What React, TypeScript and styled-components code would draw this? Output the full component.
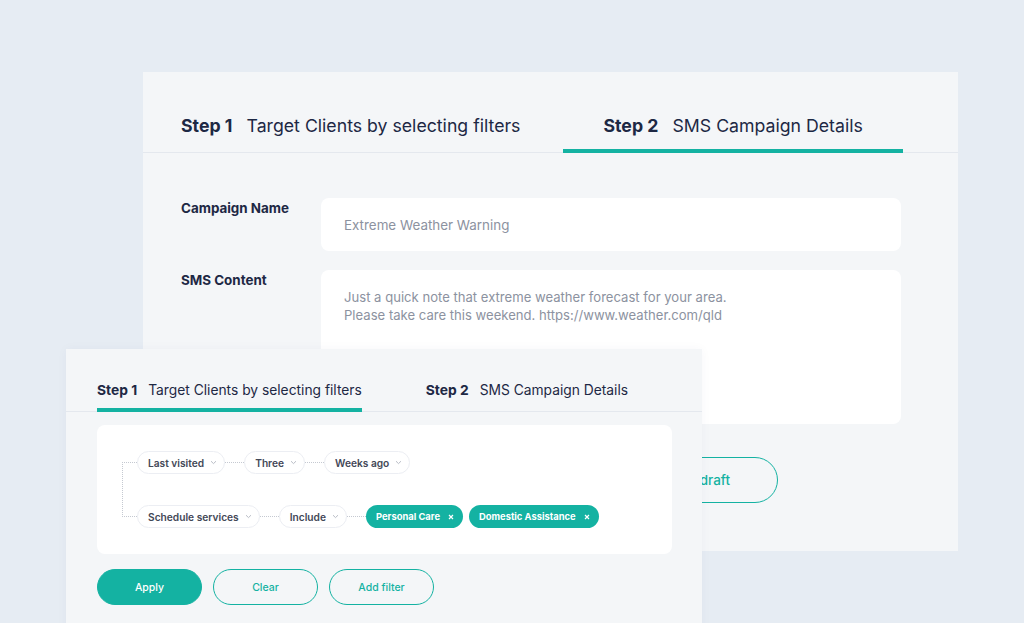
import styled, { createGlobalStyle } from "styled-components";

const teal = '#14b2a2'
const navy = '#1d2844'

const GlobalStyle = createGlobalStyle`
    html, body {
        margin: 0;
        padding: 0;
        background: #e6ecf3;
        font-family: Inter, "Noto Sans", sans-serif;
        color: ${navy};
    }
    #root {
        height: 623px;
        overflow: hidden;
    }
`

const Stage = styled.div`
    position: relative;
    width: 1024px;
    height: 623px;
    padding-top: 72px;
    box-sizing: border-box;
`

const BackCard = styled.section`
    margin-left: 143px;
    width: 815px;
    height: 479px;
    background: #f4f6f8;
    display: flex;
    flex-direction: column;
`

const FrontCard = styled.section`
    position: absolute;
    left: 66px;
    top: 349px;
    width: 636px;
    height: 290px;
    background: #f4f6f8;
    box-shadow: 0 0 10px rgba(40, 60, 90, 0.04);
    display: flex;
    flex-direction: column;
`

const TabRow = styled.div<{$height: number, $pad: number, $gap: number}>`
    display: flex;
    align-items: flex-end;
    height: ${p => p.$height}px;
    padding-left: ${p => p.$pad}px;
    gap: ${p => p.$gap}px;
    border-bottom: 1px solid #e4e8ee;
    box-sizing: border-box;
`

const Tab = styled.div<{$active: boolean, $size: number, $pad: number, $bottom: number}>`
    display: flex;
    align-items: baseline;
    gap: ${p => p.$size * 0.8}px;
    font-size: ${p => p.$size}px;
    padding: 0 ${p => p.$pad}px ${p => p.$bottom}px;
    margin-bottom: -1px;
    border-bottom: 4px solid ${p => p.$active ? teal : 'transparent'};
    white-space: nowrap;
    b { font-weight: 700; }
    span { font-weight: 400; }
`

const Form = styled.div`
    padding: 45px 57px 0 38px;
    display: flex;
    flex-direction: column;
    gap: 19px;
`

const FieldRow = styled.div`
    display: flex;
`

const Label = styled.div`
    width: 140px;
    flex-shrink: 0;
    font-size: 13.4px;
    font-weight: 700;
    padding-top: 2px;
    line-height: 16px;
`

const InputBox = styled.div<{$height: number, $size: number}>`
    flex: 1;
    height: ${p => p.$height}px;
    background: #fff;
    border-radius: 8px;
    box-sizing: border-box;
    padding: 18px 23px;
    font-size: ${p => p.$size}px;
    line-height: 18px;
    color: #8c92a0;
`

const BackButtons = styled.div`
    display: flex;
    gap: 97px;
    padding: 33px 0 0 178px;
`

const OutlineButton = styled.div<{$w: number, $h: number, $size: number, $filled?: boolean}>`
    width: ${p => p.$w}px;
    height: ${p => p.$h}px;
    border-radius: ${p => p.$h / 2}px;
    border: 1.5px solid ${teal};
    box-sizing: border-box;
    background: ${p => p.$filled ? teal : 'transparent'};
    color: ${p => p.$filled ? '#fff' : teal};
    font-size: ${p => p.$size}px;
    font-weight: 500;
    display: flex;
    align-items: center;
    justify-content: center;
`

const FilterBox = styled.div`
    margin: 13px 30px 0 31px;
    height: 129px;
    background: #fff;
    border-radius: 8px;
    padding: 26px 0 0 25px;
    box-sizing: border-box;
`

const Tree = styled.div`
    position: relative;
    display: flex;
    flex-direction: column;
    gap: 31px;
    padding-left: 15px;
    &::before {
        content: '';
        position: absolute;
        left: 0;
        top: 11px;
        bottom: 11px;
        border-left: 1px dotted #c5c9d1;
    }
`

const FilterRow = styled.div`
    position: relative;
    display: flex;
    align-items: center;
    height: 23px;
    &::before {
        content: '';
        position: absolute;
        left: -15px;
        width: 15px;
        top: 11px;
        border-top: 1px dotted #c5c9d1;
    }
`

const Connector = styled.div`
    width: 19px;
    border-top: 1px dotted #c5c9d1;
`

const Chip = styled.div`
    height: 23px;
    display: flex;
    align-items: center;
    gap: 6px;
    padding: 0 7px 0 10px;
    border: 1px solid #eceef3;
    border-radius: 12px;
    box-sizing: border-box;
    font-size: 10.2px;
    font-weight: 600;
    color: #434857;
    white-space: nowrap;
`

const Tag = styled.div`
    height: 23px;
    display: flex;
    align-items: center;
    gap: 8px;
    padding: 0 9px 0 10px;
    border-radius: 12px;
    background: ${teal};
    color: #fff;
    font-size: 9.4px;
    font-weight: 700;
    white-space: nowrap;
`

const TagGap = styled.div`
    width: 6px;
`

const FrontButtons = styled.div`
    display: flex;
    gap: 11px;
    padding: 15px 0 0 31px;
`

const Chevron = () => (
    <svg width="7" height="5" viewBox="0 0 7 5">
        <path d="M1 1.2 L3.5 3.6 L6 1.2" fill="none" stroke="#b9bdc6" strokeWidth="1" />
    </svg>
)

const Cross = () => (
    <svg width="6" height="6" viewBox="0 0 6 6">
        <path d="M1 1 L5 5 M5 1 L1 5" stroke="#fff" strokeWidth="1.2" />
    </svg>
)

export default function App() {
    return (
        <Stage>
            <GlobalStyle />
            <BackCard>
                <TabRow $height={81} $pad={0} $gap={5}>
                    <Tab $active={false} $size={17.7} $pad={38} $bottom={13}>
                        <b>Step 1</b><span>Target Clients by selecting filters</span>
                    </Tab>
                    <Tab $active={true} $size={17.7} $pad={40} $bottom={13}>
                        <b>Step 2</b><span>SMS Campaign Details</span>
                    </Tab>
                </TabRow>
                <Form>
                    <FieldRow>
                        <Label>Campaign Name</Label>
                        <InputBox $height={53} $size={13.4}>Extreme Weather Warning</InputBox>
                    </FieldRow>
                    <FieldRow>
                        <Label>SMS Content</Label>
                        <InputBox $height={154} $size={13.1}>
                            Just a quick note that extreme weather forecast for your area.<br />
                            Please take care this weekend. https://www.weather.com/qld
                        </InputBox>
                    </FieldRow>
                </Form>
                <BackButtons>
                    <OutlineButton $w={180} $h={46} $size={13.5} $filled>Send now</OutlineButton>
                    <OutlineButton $w={180} $h={46} $size={13.5}>Save as draft</OutlineButton>
                </BackButtons>
            </BackCard>

            <FrontCard>
                <TabRow $height={63} $pad={31} $gap={64}>
                    <Tab $active={true} $size={13.8} $pad={0} $bottom={10}>
                        <b>Step 1</b><span>Target Clients by selecting filters</span>
                    </Tab>
                    <Tab $active={false} $size={13.8} $pad={0} $bottom={10}>
                        <b>Step 2</b><span>SMS Campaign Details</span>
                    </Tab>
                </TabRow>
                <FilterBox>
                    <Tree>
                        <FilterRow>
                            <Chip>Last visited <Chevron /></Chip>
                            <Connector />
                            <Chip>Three <Chevron /></Chip>
                            <Connector />
                            <Chip>Weeks ago <Chevron /></Chip>
                        </FilterRow>
                        <FilterRow>
                            <Chip>Schedule services <Chevron /></Chip>
                            <Connector />
                            <Chip>Include <Chevron /></Chip>
                            <Connector />
                            <Tag>Personal Care <Cross /></Tag>
                            <TagGap />
                            <Tag>Domestic Assistance <Cross /></Tag>
                        </FilterRow>
                    </Tree>
                </FilterBox>
                <FrontButtons>
                    <OutlineButton $w={105} $h={36} $size={10.5} $filled>Apply</OutlineButton>
                    <OutlineButton $w={105} $h={36} $size={10.5}>Clear</OutlineButton>
                    <OutlineButton $w={105} $h={36} $size={10.5}>Add filter</OutlineButton>
                </FrontButtons>
            </FrontCard>
        </Stage>
    )
}
